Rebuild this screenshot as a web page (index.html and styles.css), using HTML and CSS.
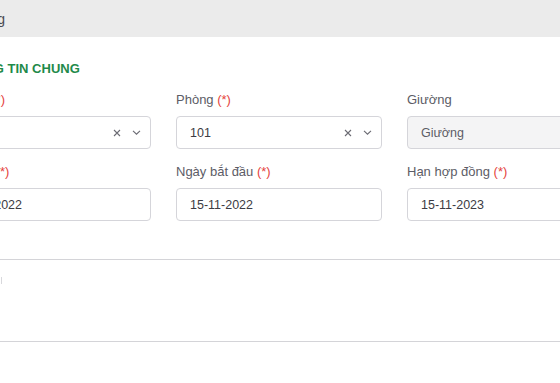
FILE: index.html
```html
<!DOCTYPE html>
<html lang="vi">
<head>
    <meta charset="UTF-8">
    <meta name="viewport" content="width=device-width, initial-scale=1.0">
    <title>Hợp đồng</title>
    <link rel="stylesheet" href="styles.css">
</head>
<body>
<div class="page">

    <!-- Top bar -->
    <header class="topbar">
        <h1 class="topbar-title">Hợp đồng</h1>
    </header>

    <main class="content">
        <section class="section">
            <h2 class="section-title">THÔNG TIN CHUNG</h2>

            <div class="form-grid">
                <div class="field">
                    <label class="field-label">Nhà trọ <span class="req">(*)</span></label>
                    <div class="select">
                        <span class="select-value">Tòa A</span>
                        <span class="select-clear">
                            <svg width="8" height="8" viewBox="0 0 8 8"><path d="M1 1L7 7M7 1L1 7" stroke="#6b6b73" stroke-width="1.1" fill="none"/></svg>
                        </span>
                        <span class="select-arrow">
                            <svg width="9" height="5" viewBox="0 0 9 5"><path d="M1 0.8L4.5 4.2L8 0.8" stroke="#6b6b73" stroke-width="1.1" fill="none"/></svg>
                        </span>
                    </div>
                </div>

                <div class="field">
                    <label class="field-label">Phòng <span class="req">(*)</span></label>
                    <div class="select">
                        <span class="select-value">101</span>
                        <span class="select-clear">
                            <svg width="8" height="8" viewBox="0 0 8 8"><path d="M1 1L7 7M7 1L1 7" stroke="#6b6b73" stroke-width="1.1" fill="none"/></svg>
                        </span>
                        <span class="select-arrow">
                            <svg width="9" height="5" viewBox="0 0 9 5"><path d="M1 0.8L4.5 4.2L8 0.8" stroke="#6b6b73" stroke-width="1.1" fill="none"/></svg>
                        </span>
                    </div>
                </div>

                <div class="field">
                    <label class="field-label">Giường</label>
                    <div class="input input-disabled">Giường</div>
                </div>

                <div class="field">
                    <label class="field-label">Ngày ký <span class="req">(*)</span></label>
                    <div class="input">15-11-2022</div>
                </div>

                <div class="field">
                    <label class="field-label">Ngày bắt đầu <span class="req">(*)</span></label>
                    <div class="input">15-11-2022</div>
                </div>

                <div class="field">
                    <label class="field-label">Hạn hợp đồng <span class="req">(*)</span></label>
                    <div class="input">15-11-2023</div>
                </div>
            </div>
        </section>

        <hr class="divider">

        <section class="section-extra">
            <span class="extra-mark"></span>
        </section>

        <hr class="divider">
    </main>

</div>
</body>
</html>
```

FILE: styles.css
```css
body {
    margin: 0;
    padding: 0;
    font-family: "Liberation Sans", Arial, sans-serif;
    background-color: #ffffff;
    overflow: hidden;
}

/* page is wider than the window, left part scrolled off */
.page {
    margin-left: -75px;
    width: 720px;
}

/* Top bar */
.topbar {
    height: 37px;
    background-color: #ebebeb;
    display: flex;
    align-items: center;
    padding-left: 18px;
}

.topbar-title {
    margin: 0;
    font-size: 14px;
    font-weight: 400;
    color: #4a4a52;
}

/* Content */
.content {
    padding: 0 20px;
}

.section-title {
    margin: 24px 0 0 12px;
    font-size: 13px;
    line-height: 16px;
    font-weight: 700;
    color: #1f8a4a;
}

.form-grid {
    margin-top: 14px;
    display: grid;
    grid-template-columns: repeat(3, 206px);
    column-gap: 25px;
    row-gap: 14px;
}

.field {
    display: flex;
    flex-direction: column;
}

.field-label {
    font-size: 13px;
    line-height: 18px;
    color: #5c5c66;
    margin-bottom: 7px;
}

.req {
    color: #e5433d;
}

.input, .select {
    height: 33px;
    box-sizing: border-box;
    border: 1px solid #d5d5da;
    border-radius: 4px;
    padding: 0 9px 0 13px;
    display: flex;
    align-items: center;
    font-size: 12.5px;
    color: #3c3c44;
    background-color: #fff;
}

.input-disabled {
    background-color: #f4f4f5;
    color: #5c5c66;
}

.select-value {
    flex: 1;
}

.select-clear {
    display: flex;
    margin-right: 11px;
}

.select-arrow {
    display: flex;
}

/* Lower part */
.divider {
    margin: 0;
    border: none;
    border-top: 1px solid #d4d4d8;
}

.form-grid + .divider {
    margin-top: 38px;
}

.section {
    padding-bottom: 38px;
}

.section-extra {
    height: 81px;
    padding-top: 17px;
    box-sizing: border-box;
}

.extra-mark {
    display: block;
    width: 56px;
    height: 7px;
    border-right: 1.5px solid #d8d8dc;
}
```
